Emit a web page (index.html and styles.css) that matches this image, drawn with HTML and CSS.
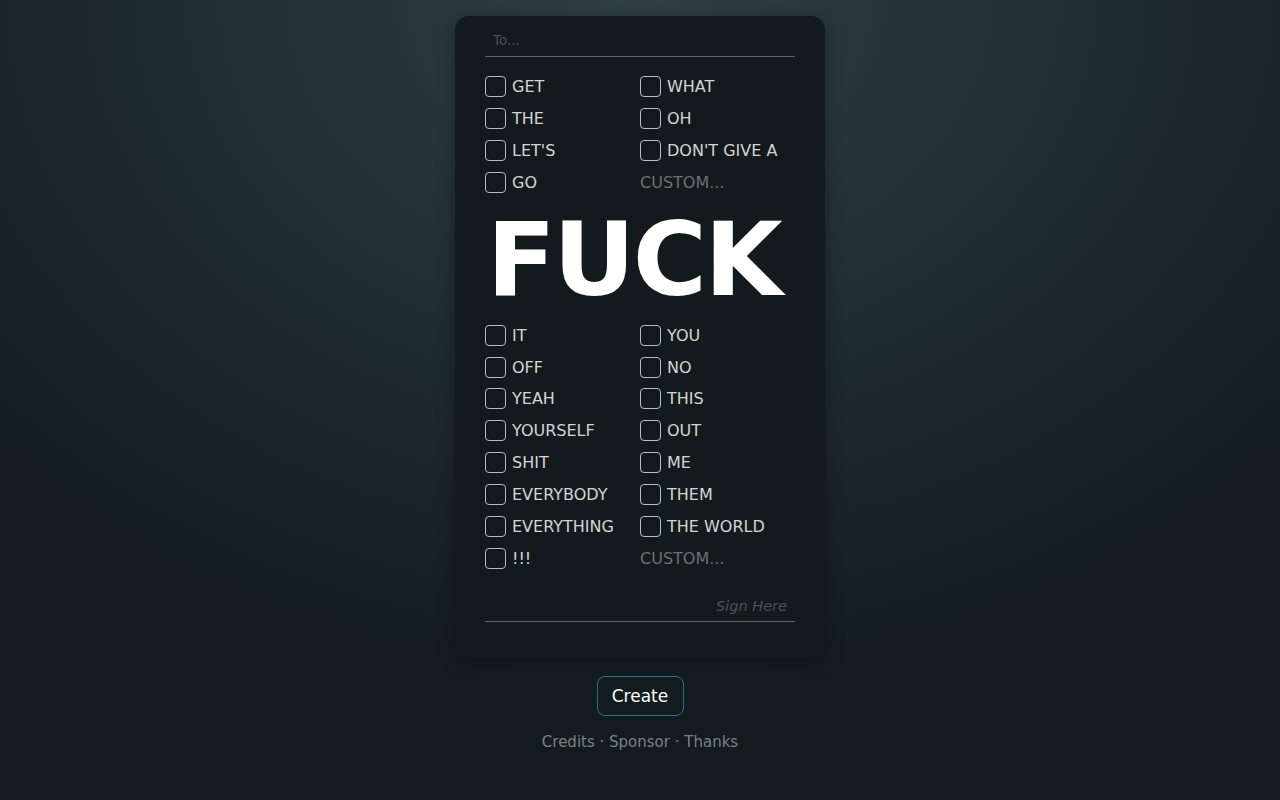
FILE: index.html
```html
<!DOCTYPE html>
<html lang="en">

<head>
    <meta charset="UTF-8" />
    <meta name="viewport" content="width=device-width, initial-scale=1.0" />
    <title>FUCK</title>
    <link rel="stylesheet" href="styles.css">
</head>

<body>
    <main class="page">
        <form class="card" id="card">
            <input class="to-input" type="text" placeholder="To..." />

            <div class="word-grid">
                <label class="word"><input type="checkbox" /><span class="box"></span>GET</label>
                <label class="word"><input type="checkbox" /><span class="box"></span>WHAT</label>
                <label class="word"><input type="checkbox" /><span class="box"></span>THE</label>
                <label class="word"><input type="checkbox" /><span class="box"></span>OH</label>
                <label class="word"><input type="checkbox" /><span class="box"></span>LET'S</label>
                <label class="word"><input type="checkbox" /><span class="box"></span>DON'T GIVE A</label>
                <label class="word"><input type="checkbox" /><span class="box"></span>GO</label>
                <input class="custom" type="text" placeholder="CUSTOM..." />
            </div>

            <h1 class="big-word">FUCK</h1>

            <div class="word-grid">
                <label class="word"><input type="checkbox" /><span class="box"></span>IT</label>
                <label class="word"><input type="checkbox" /><span class="box"></span>YOU</label>
                <label class="word"><input type="checkbox" /><span class="box"></span>OFF</label>
                <label class="word"><input type="checkbox" /><span class="box"></span>NO</label>
                <label class="word"><input type="checkbox" /><span class="box"></span>YEAH</label>
                <label class="word"><input type="checkbox" /><span class="box"></span>THIS</label>
                <label class="word"><input type="checkbox" /><span class="box"></span>YOURSELF</label>
                <label class="word"><input type="checkbox" /><span class="box"></span>OUT</label>
                <label class="word"><input type="checkbox" /><span class="box"></span>SHIT</label>
                <label class="word"><input type="checkbox" /><span class="box"></span>ME</label>
                <label class="word"><input type="checkbox" /><span class="box"></span>EVERYBODY</label>
                <label class="word"><input type="checkbox" /><span class="box"></span>THEM</label>
                <label class="word"><input type="checkbox" /><span class="box"></span>EVERYTHING</label>
                <label class="word"><input type="checkbox" /><span class="box"></span>THE WORLD</label>
                <label class="word"><input type="checkbox" /><span class="box"></span>!!!</label>
                <input class="custom" type="text" placeholder="CUSTOM..." />
            </div>

            <input class="sign-input" type="text" placeholder="Sign Here" />
        </form>

        <button class="create-btn" type="button">Create</button>

        <p class="links">
            <a href="#">Credits</a> &middot; <a href="#">Sponsor</a> &middot; <a href="#">Thanks</a>
        </p>
    </main>
</body>

</html>
```

FILE: styles.css
```css
* {
    margin: 0;
    padding: 0;
    box-sizing: border-box;
    font-family: 'DejaVu Sans', 'Noto Sans', sans-serif;
}

body {
    min-height: 100vh;
    background: radial-gradient(ellipse 900px 700px at 50% 0%, #304046 0%, #1e2b30 55%, #131b1f 100%);
    background-color: #131b1f;
    color: #d6d8d8;
}

.page {
    display: flex;
    flex-direction: column;
    align-items: center;
    padding-top: 16px;
}

.card {
    width: 370px;
    background: #131a1d;
    border-radius: 14px;
    padding: 12px 30px 36px;
    box-shadow: 0 4px 18px rgba(0, 0, 0, 0.35);
}

.to-input {
    display: block;
    width: 100%;
    height: 29px;
    padding: 0 8px 4px;
    background: none;
    border: none;
    border-bottom: 1px solid #5b6366;
    color: #d6d8d8;
    font-size: 13.5px;
    outline: none;
    margin-bottom: 14px;
}

.to-input::placeholder {
    color: #485154;
}

.word-grid {
    display: grid;
    grid-template-columns: 155px 155px;
    grid-auto-rows: 31.85px;
}

.word {
    display: flex;
    align-items: center;
    gap: 6px;
    font-size: 16px;
    color: #d3d5d5;
    cursor: pointer;
    white-space: nowrap;
}

.word input {
    display: none;
}

.box {
    width: 21px;
    height: 21px;
    border: 1px solid #b9bdbe;
    border-radius: 4px;
    flex-shrink: 0;
}

.word input:checked + .box {
    background: #d3d5d5;
}

.custom {
    width: 100%;
    background: none;
    border: none;
    outline: none;
    color: #d3d5d5;
    font-size: 16px;
    padding: 0;
}

.custom::placeholder {
    color: #6a6f71;
}

.big-word {
    font-size: 101px;
    font-weight: bold;
    line-height: 121px;
    padding-top: 2px;
    padding-right: 13px;
    height: 121px;
    color: #ffffff;
    text-align: center;
    letter-spacing: -2.5px;
}

.sign-input {
    display: block;
    width: 100%;
    height: 32px;
    margin-top: 16px;
    padding: 0 8px;
    background: none;
    border: none;
    border-bottom: 1px solid #5b6366;
    text-align: right;
    font-style: italic;
    font-size: 14.5px;
    color: #d6d8d8;
    outline: none;
}

.sign-input::placeholder {
    color: #4a5356;
}

.create-btn {
    margin-top: 18px;
    width: 87px;
    height: 40px;
    background: #131c20;
    border: 1px solid #2b6f86;
    border-radius: 8px;
    color: #ffffff;
    font-size: 17px;
    cursor: pointer;
}

.links {
    margin-top: 17px;
    font-size: 15px;
    color: #7a8184;
}

.links a {
    color: #7a8184;
    text-decoration: none;
}
```
